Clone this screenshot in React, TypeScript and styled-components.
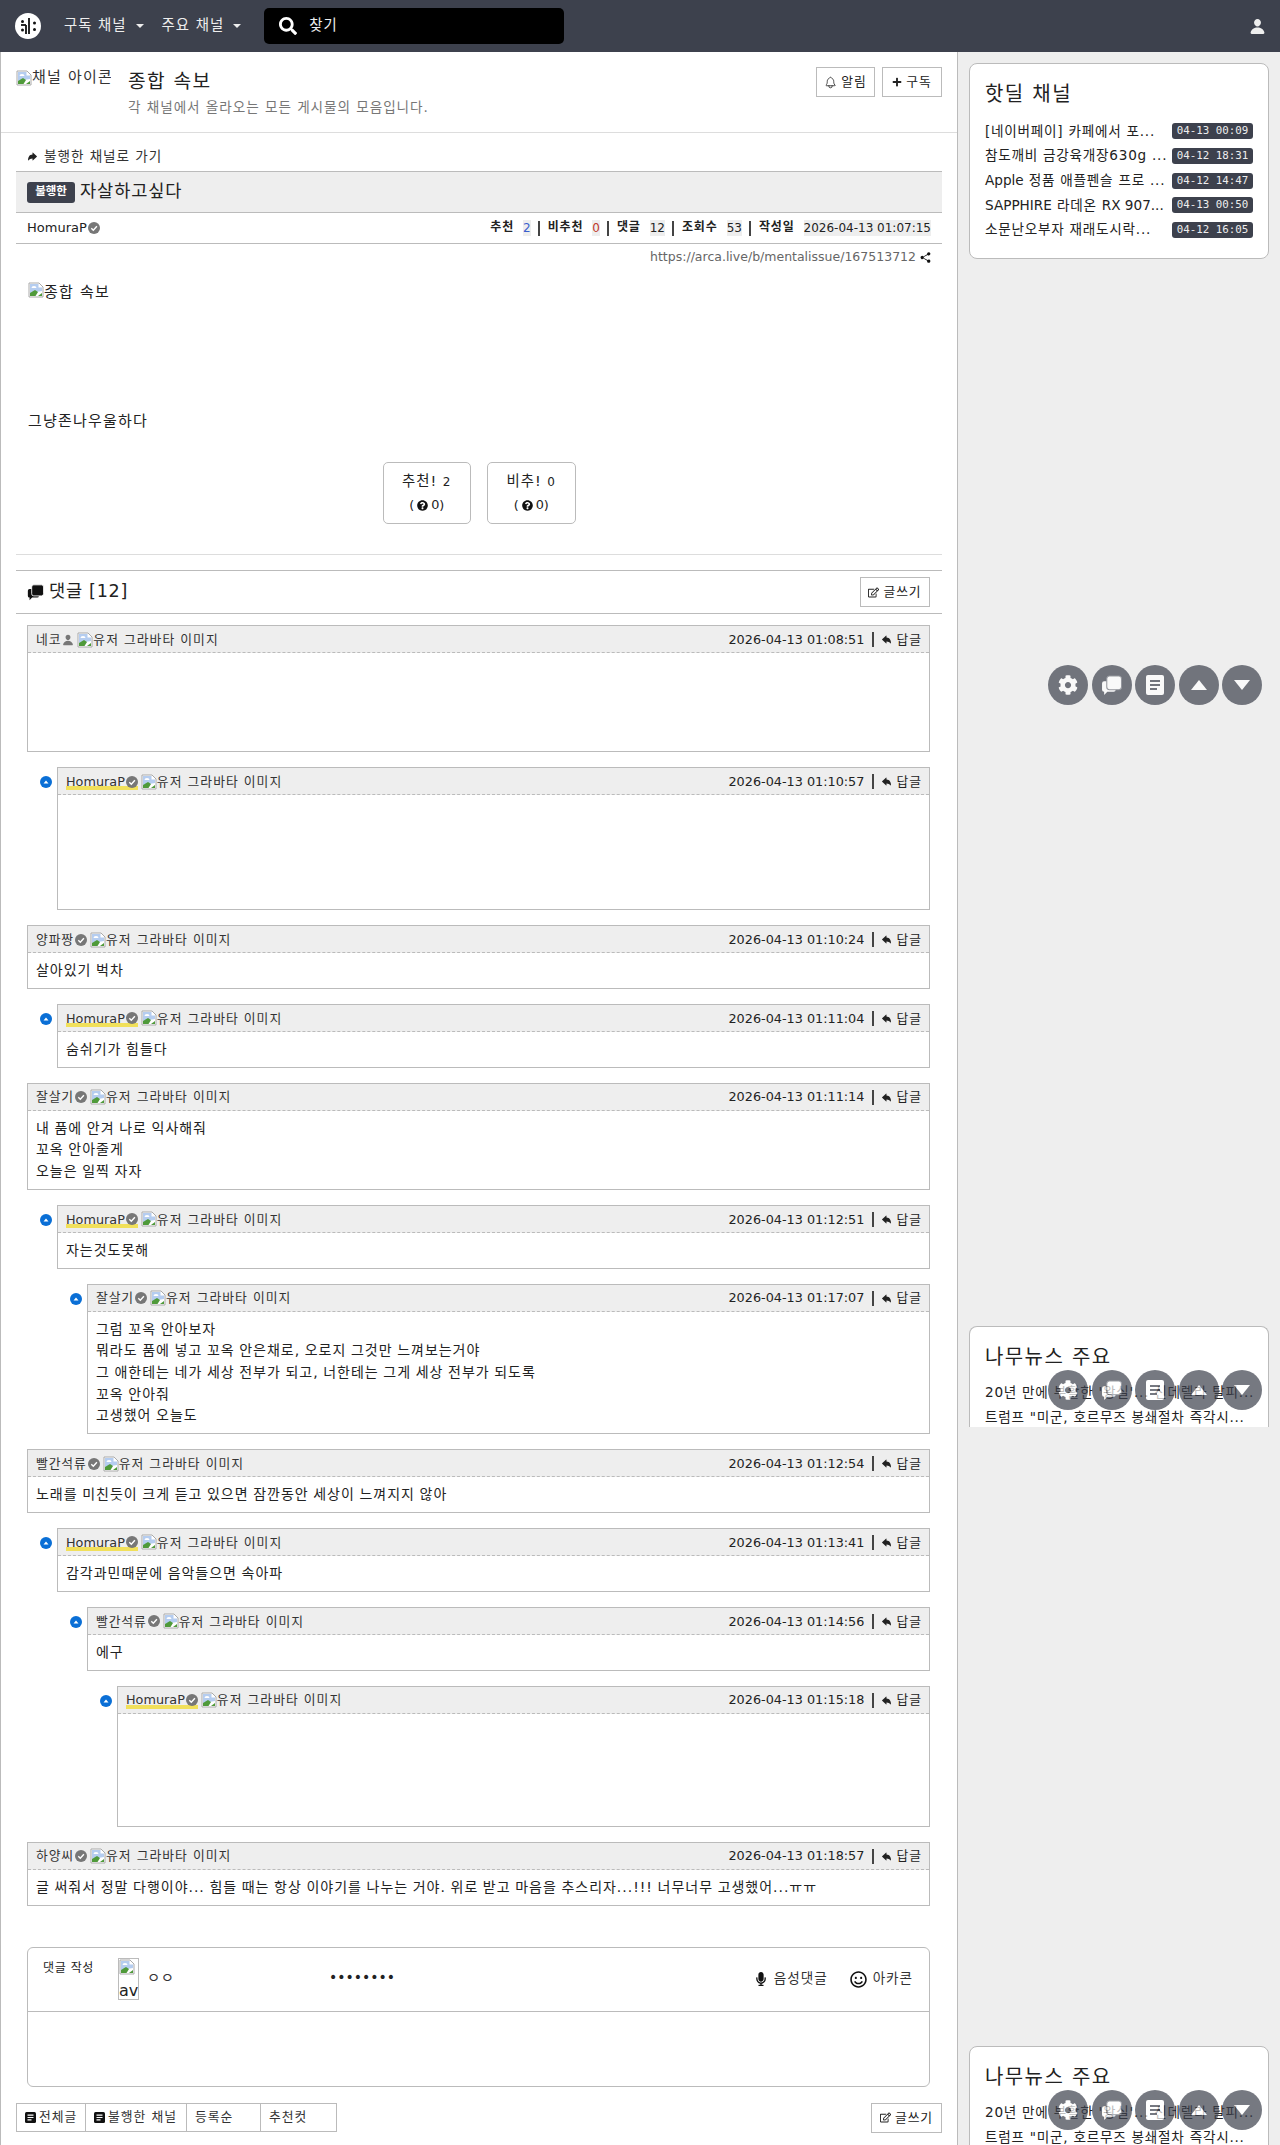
import type { ReactNode } from "react";
import styled, { createGlobalStyle } from "styled-components";
import {
  FaSearch,
  FaPlus,
  FaRegEdit,
  FaMicrophone,
  FaRegSmile,
  FaQuestionCircle,
  FaCog,
} from "react-icons/fa";
import {
  IoPerson,
  IoNotificationsOutline,
  IoShareSocial,
  IoArrowUndo,
  IoArrowRedo,
} from "react-icons/io5";

const GlobalStyle = createGlobalStyle`
  html, body {
    margin: 0;
    padding: 0;
  }
  body {
    font-family: "DejaVu Sans", "Noto Sans CJK KR", sans-serif;
    font-size: 14.4px;
    line-height: 21.6px;
    color: #222;
    background: #eee;
  }
  * {
    box-sizing: border-box;
  }
`;

const Page = styled.div`
  position: relative;
  width: 1280px;
  height: 2145px;
  overflow: hidden;
`;

const TopBar = styled.header`
  height: 52px;
  background: #3d414d;
  display: flex;
  align-items: center;
  padding: 0 14px 0 15px;
  color: #eee;
`;

const NavItem = styled.div`
  display: flex;
  align-items: center;
  font-size: 14.4px;
  letter-spacing: 0.07em;
  margin-right: 18px;

  &::after {
    content: "";
    margin-left: 9px;
    border-top: 4.5px solid #eee;
    border-left: 4.5px solid transparent;
    border-right: 4.5px solid transparent;
  }
`;

const Logo = styled.svg`
  width: 26px;
  height: 26px;
  margin-right: 23px;
`;

const SearchBox = styled.div`
  width: 300px;
  height: 36px;
  margin-left: 5px;
  background: #000;
  border-radius: 5px;
  display: flex;
  align-items: center;
  padding-left: 15px;
  gap: 12px;
  color: #eee;
  font-size: 14.4px;
  letter-spacing: 0.07em;
`;

const UserButton = styled.div`
  margin-left: auto;
  display: flex;
  color: #eee;
  font-size: 17px;
`;

const Body = styled.div`
  display: flex;
  align-items: flex-start;
`;

const Main = styled.main`
  width: 958px;
  height: 2093px;
  background: #fff;
  border-left: 1px solid #bbb;
  border-right: 1px solid #bbb;
`;

const ChannelHead = styled.section`
  height: 81px;
  border-bottom: 1px solid #ddd;
  display: flex;
  padding: 15px 15px 0;
`;

const ChannelIcon = styled.div`
  width: 95px;
  height: 20px;
  margin: 1px 17px 0 0;
  overflow: hidden;
  white-space: nowrap;
  font-size: 15px;
  letter-spacing: 0.08em;
  color: #333;
  display: flex;
  align-items: center;
`;

const ChannelText = styled.div`
  flex: 1;
`;

const ChannelTitle = styled.h1`
  margin: 0;
  font-weight: 400;
  font-size: 19.2px;
  letter-spacing: 0.07em;
  line-height: 30px;
  color: #222;
`;

const ChannelDesc = styled.p`
  margin: 0;
  font-size: 13.6px;
  letter-spacing: 0.07em;
  line-height: 20px;
  color: #777;
`;

const OutlineButton = styled.div<{ $w: number }>`
  width: ${(p) => p.$w}px;
  height: 30px;
  display: inline-flex;
  align-items: center;
  justify-content: center;
  gap: 4px;
  border: 1px solid #bbb;
  background: #fff;
  font-size: 12.8px;
  letter-spacing: 0.07em;
  color: #222;
  white-space: nowrap;
`;

const ChannelActions = styled.div`
  display: flex;
  gap: 7px;
`;

const Article = styled.article`
  padding: 0 15px;
`;

const BackLink = styled.div`
  height: 38px;
  display: flex;
  align-items: center;
  gap: 6px;
  padding: 9px 0 0 11px;
  font-size: 13.6px;
  letter-spacing: 0.07em;
  color: #333;
`;

const TitleBar = styled.div`
  height: 42px;
  display: flex;
  align-items: center;
  padding-left: 11px;
  gap: 5px;
  background: #eee;
  border-top: 1px solid #bbb;
  border-bottom: 1px solid #bbb;
  font-size: 17.6px;
  letter-spacing: 0.05em;
  color: #222;
`;

const CategoryBadge = styled.span`
  height: 21px;
  width: 48px;
  display: inline-flex;
  align-items: center;
  justify-content: center;
  border-radius: 3px;
  background: #3d414d;
  color: #fff;
  font-size: 11.5px;
  font-weight: 700;
  letter-spacing: 0;
`;

const InfoRow = styled.div`
  height: 31px;
  display: flex;
  align-items: center;
  justify-content: space-between;
  padding: 0 11px;
  border-bottom: 1px solid #bbb;
  font-size: 13px;
`;

const Author = styled.span`
  display: inline-flex;
  align-items: center;
  gap: 1px;
`;

const Stats = styled.div`
  display: flex;
  align-items: center;
  font-size: 12px;
`;

const StatLabel = styled.b`
  margin-right: 9px;
  letter-spacing: 0.07em;
`;

const StatValue = styled.span<{ $color?: string }>`
  background: #eee;
  line-height: 16px;
  color: ${(p) => p.$color ?? "#222"};
`;

const StatSep = styled.i`
  width: 2px;
  height: 15px;
  margin: 0 7.5px;
  background: #444;
`;

const UrlRow = styled.div`
  height: 26px;
  display: flex;
  align-items: center;
  justify-content: flex-end;
  gap: 3px;
  padding-right: 10px;
  font-size: 12.5px;
  color: #666;
`;

const ArticleBody = styled.div`
  height: 192px;
  padding: 12px 12px 0;
  font-size: 15px;
  letter-spacing: 0.08em;
`;

const ArticleImage = styled.div`
  display: flex;
  height: 129px;
  align-items: flex-start;
`;

const VoteRow = styled.div`
  display: flex;
  justify-content: center;
  gap: 16px;
  border-bottom: 1px solid #ddd;
  height: 93px;
`;

const VoteButton = styled.div`
  width: 88.5px;
  height: 62px;
  border: 1px solid #bbb;
  border-radius: 5px;
  text-align: center;
  padding-top: 6px;
  font-size: 14.4px;
  letter-spacing: 0.07em;
  line-height: 24px;
`;

const VoteCount = styled.small`
  font-size: 12px;
`;

const VoteSub = styled.div`
  font-size: 12.8px;
  letter-spacing: 0;
  line-height: 22px;
  display: flex;
  align-items: center;
  justify-content: center;
  gap: 3px;
`;

const CommentHead = styled.div`
  margin-top: 15px;
  height: 44px;
  display: flex;
  align-items: center;
  justify-content: space-between;
  border-top: 1px solid #bbb;
  border-bottom: 1px solid #bbb;
  padding: 0 12px 0 11px;
`;

const CommentTitle = styled.h2`
  margin: 0;
  display: flex;
  align-items: center;
  gap: 5px;
  font-size: 17.6px;
  letter-spacing: 0.04em;
  font-weight: 400;
  color: #222;
`;

const CommentList = styled.div`
  display: flex;
  flex-direction: column;
  gap: 15px;
  padding: 11px 12px 0 11px;
`;

const CommentBox = styled.div<{ $depth: number }>`
  position: relative;
  margin-left: ${(p) => p.$depth * 30}px;
  border: 1px solid #bbb;
`;

const CollapseMark = styled.svg`
  position: absolute;
  left: -18px;
  top: 8px;
  width: 12px;
  height: 12px;
`;

const CommentInfo = styled.div`
  height: 27px;
  background: #eee;
  border-bottom: 1px dashed #bbb;
  display: flex;
  align-items: center;
  justify-content: space-between;
  padding: 1px 8px 0;
  font-size: 12.8px;
  color: #333;
`;

const CommentUser = styled.div`
  display: flex;
  align-items: center;
  gap: 3px;
`;

const UserName = styled.span<{ $mine?: boolean }>`
  display: inline-flex;
  align-items: center;
  gap: 1px;
  letter-spacing: ${(p) => (p.$mine ? 0 : "0.07em")};
  background: ${(p) =>
    p.$mine
      ? "linear-gradient(to bottom, transparent 72%, #f1e05a 72%, #f1e05a 92%, transparent 92%)"
      : "none"};
`;

const AltImage = styled.span`
  display: inline-flex;
  align-items: center;
  letter-spacing: 0.08em;
`;

const CommentMeta = styled.div`
  display: flex;
  align-items: center;
  gap: 4px;
  color: #222;
`;

const MetaSep = styled.i`
  width: 2px;
  height: 15px;
  margin: 0 3px 0 4px;
  background: #444;
`;

const ReplyLabel = styled.span`
  letter-spacing: 0.08em;
  margin-right: -1px;
`;

const CommentText = styled.div<{ $blank?: number }>`
  min-height: ${(p) => p.$blank ?? 0}px;
  padding: 7px 8px 6.3px;
  font-size: 14px;
  letter-spacing: 0.07em;
  word-spacing: -0.8px;
  line-height: 21.6px;
  color: #222;
  white-space: pre-line;
`;

const WriteBox = styled.div`
  margin: 41px 12px 0 11px;
  height: 140px;
  border: 1px solid #bbb;
  border-radius: 6px;
`;

const WriteTop = styled.div`
  height: 64px;
  border-bottom: 1px solid #bbb;
  position: relative;
  display: flex;
  align-items: center;
  padding: 0 16px 0 15px;
  font-size: 14.4px;
`;

const WriteLabel = styled.span`
  align-self: flex-start;
  margin-top: 10px;
  width: 75px;
  font-size: 12px;
  letter-spacing: 0.05em;
`;

const AvatarBox = styled.div`
  width: 21px;
  height: 42px;
  border: 1px solid #bbb;
  overflow: hidden;
  font-size: 16px;
  line-height: 21px;
  margin-right: 8px;
`;

const WriterName = styled.span`
  width: 182px;
  font-size: 14.4px;
  letter-spacing: 0.5px;
  color: #333;
`;

const PasswordDots = styled.span`
  font-size: 14px;
  letter-spacing: 0;
  margin-top: -2px;
`;

const WriteTools = styled.div`
  margin-left: auto;
  display: flex;
  align-items: center;
  font-size: 13.6px;
  letter-spacing: 0.07em;
  color: #333;
`;

const WriteTool = styled.span`
  display: inline-flex;
  align-items: center;
  gap: 6px;
  margin-left: 22px;
`;

const BottomBar = styled.div`
  margin-top: 16px;
  display: flex;
  justify-content: space-between;
`;

const Tabs = styled.div`
  display: flex;
`;

const Tab = styled.div<{ $w: number }>`
  width: ${(p) => p.$w}px;
  height: 29px;
  border: 1px solid #bbb;
  margin-left: -1px;
  display: flex;
  align-items: center;
  gap: 3px;
  padding-left: 8px;
  font-size: 12.8px;
  letter-spacing: 0.08em;
  color: #333;

  &:first-child {
    margin-left: 0;
  }
`;

const Sidebar = styled.aside`
  width: 322px;
  padding: 0 11px;
`;

const Card = styled.section<{ $top: number; $clip?: number }>`
  margin-top: ${(p) => p.$top}px;
  height: ${(p) => (p.$clip ? `${p.$clip}px` : "auto")};
  overflow: hidden;
  background: #fff;
  border: 1px solid #bbb;
  border-bottom: ${(p) => (p.$clip ? "none" : "1px solid #bbb")};
  border-radius: 8px 8px ${(p) => (p.$clip ? "0 0" : "8px 8px")};
  padding: 15px 15px 16px;
`;

const CardTitle = styled.h3<{ $gap: number }>`
  margin: 0 0 ${(p) => p.$gap}px;
  font-size: 20px;
  letter-spacing: 0.07em;
  font-weight: 400;
  line-height: 30px;
  color: #222;
`;

const CardRow = styled.div`
  height: 24.7px;
  display: flex;
  align-items: center;
  justify-content: space-between;
  font-size: 13.6px;
  letter-spacing: 0.055em;
  color: #222;
  white-space: nowrap;
`;

const Latin = styled.span`
  letter-spacing: 0;
`;

const DateBadge = styled.span`
  flex: none;
  width: 81px;
  height: 16px;
  text-align: center;
  background: #3d414d;
  color: #eee;
  border-radius: 3px;
  font-family: "DejaVu Sans Mono", monospace;
  font-size: 10.8px;
  letter-spacing: 0;
  line-height: 16px;
`;

const FloatGroup = styled.div<{ $top: number }>`
  position: absolute;
  top: ${(p) => p.$top}px;
  left: 1048px;
  display: flex;
  gap: 3.5px;
`;

const FloatButton = styled.div`
  width: 40px;
  height: 40px;
  border-radius: 50%;
  background: #3d414d;
  opacity: 0.7;
  color: #fff;
  display: flex;
  align-items: center;
  justify-content: center;
  font-size: 20px;
`;

function BrokenImage() {
  return (
    <svg width="16" height="16" viewBox="0 0 16 16" style={{ flex: "none" }}>
      <path d="M1 1h10l4 4v10H1z" fill="#fff" stroke="#aaa" />
      <path d="M2 2h8.500v3.500H14V9L2 11z" fill="#b5cdf0" />
      <path d="M3.500 6a2.500 2 0 0 1 5 0z" fill="#fff" />
      <path d="M2 14v-3l5-3 3 2-2.500 4z" fill="#4f9a3a" />
      <path d="M10 14l4-3v3z" fill="#4f9a3a" />
    </svg>
  );
}

function Verified() {
  return (
    <svg width="12" height="12" viewBox="0 0 12 12" style={{ flex: "none" }}>
      <circle cx="6" cy="6" r="6" fill="#777" />
      <path d="M3.300 6.200l2 2 3.600-4" fill="none" stroke="#fff" strokeWidth="1.400" />
    </svg>
  );
}

function ListIcon() {
  return (
    <svg width="11" height="11" viewBox="0 0 11 11" style={{ flex: "none" }}>
      <rect width="11" height="11" rx="1.500" fill="#111" />
      <path d="M2.500 3.200h6M2.500 5.500h6M2.500 7.800h4" stroke="#fff" strokeWidth="1.200" />
    </svg>
  );
}

function DocIcon() {
  return (
    <svg width="18" height="20" viewBox="0 0 18 20">
      <rect width="18" height="20" rx="2" fill="#fff" />
      <path d="M4 6h10M4 10h10M4 14h7" stroke="#3d414d" strokeWidth="2" />
    </svg>
  );
}

function BubblesIcon({ size, color, gap }: { size: number; color: string; gap: string }) {
  return (
    <svg width={size} height={size} viewBox="0 0 20 20">
      <path
        d="M3 6h9a2 2 0 0 1 2 2v6a2 2 0 0 1-2 2H6l-3 3v-3a2 2 0 0 1-2-2V8a2 2 0 0 1 2-2z"
        fill={color}
      />
      <path
        d="M8 1h9a2.500 2.500 0 0 1 2.500 2.500v8A2.500 2.500 0 0 1 17 14H8a2.500 2.500 0 0 1-2.500-2.500v-8A2.500 2.500 0 0 1 8 1z"
        fill={color}
        stroke={gap}
      />
    </svg>
  );
}

function Triangle({ down }: { down?: boolean }) {
  return (
    <svg width="16" height="12" viewBox="0 0 16 12">
      <path d={down ? "M0 1h16L8 11z" : "M0 11h16L8 1z"} fill="#fff" />
    </svg>
  );
}

function FloatButtons({ top }: { top: number }) {
  return (
    <FloatGroup $top={top}>
      <FloatButton>
        <FaCog />
      </FloatButton>
      <FloatButton>
        <BubblesIcon size={21} color="#fff" gap="#6f727b" />
      </FloatButton>
      <FloatButton>
        <DocIcon />
      </FloatButton>
      <FloatButton>
        <Triangle />
      </FloatButton>
      <FloatButton>
        <Triangle down />
      </FloatButton>
    </FloatGroup>
  );
}

type Comment = {
  name: string;
  date: string;
  depth: number;
  text?: string;
  blank?: number;
  guest?: boolean;
};

const comments: Comment[] = [
  { name: "네코", date: "2026-04-13 01:08:51", depth: 0, blank: 98, guest: true },
  { name: "HomuraP", date: "2026-04-13 01:10:57", depth: 1, blank: 114 },
  { name: "양파짱", date: "2026-04-13 01:10:24", depth: 0, text: "살아있기 벅차" },
  { name: "HomuraP", date: "2026-04-13 01:11:04", depth: 1, text: "숨쉬기가 힘들다" },
  {
    name: "잘살기",
    date: "2026-04-13 01:11:14",
    depth: 0,
    text: "내 품에 안겨 나로 익사해줘\n꼬옥 안아줄게\n오늘은 일찍 자자",
  },
  { name: "HomuraP", date: "2026-04-13 01:12:51", depth: 1, text: "자는것도못해" },
  {
    name: "잘살기",
    date: "2026-04-13 01:17:07",
    depth: 2,
    text: "그럼 꼬옥 안아보자\n뭐라도 품에 넣고 꼬옥 안은채로, 오로지 그것만 느껴보는거야\n그 애한테는 네가 세상 전부가 되고, 너한테는 그게 세상 전부가 되도록\n꼬옥 안아줘\n고생했어 오늘도",
  },
  {
    name: "빨간석류",
    date: "2026-04-13 01:12:54",
    depth: 0,
    text: "노래를 미친듯이 크게 듣고 있으면 잠깐동안 세상이 느껴지지 않아",
  },
  {
    name: "HomuraP",
    date: "2026-04-13 01:13:41",
    depth: 1,
    text: "감각과민때문에 음악들으면 속아파",
  },
  { name: "빨간석류", date: "2026-04-13 01:14:56", depth: 2, text: "에구" },
  { name: "HomuraP", date: "2026-04-13 01:15:18", depth: 3, blank: 112 },
  {
    name: "하양씨",
    date: "2026-04-13 01:18:57",
    depth: 0,
    text: "글 써줘서 정말 다행이야... 힘들 때는 항상 이야기를 나누는 거야. 위로 받고 마음을 추스리자...!!! 너무너무 고생했어...ㅠㅠ",
  },
];

const hotDeals: { title: ReactNode; date: string }[] = [
  { title: "[네이버페이] 카페에서 포...", date: "04-13 00:09" },
  { title: "참도깨비 금강육개장630g ...", date: "04-12 18:31" },
  { title: <><Latin>Apple</Latin> 정품 애플펜슬 프로 ...</>, date: "04-12 14:47" },
  { title: <><Latin>SAPPHIRE</Latin> 라데온 <Latin>RX 907...</Latin></>, date: "04-13 00:50" },
  { title: "소문난오부자 재래도시락...", date: "04-12 16:05" },
];

function NewsCard({ top, clip }: { top: number; clip?: number }) {
  return (
    <Card $top={top} $clip={clip}>
      <CardTitle $gap={8}>나무뉴스 주요</CardTitle>
      <CardRow>20년 만에 부활한 '왕실'... 신데렐라 탈피...</CardRow>
      <CardRow>트럼프 "미군, 호르무즈 봉쇄절차 즉각시...</CardRow>
    </Card>
  );
}

export default function App() {
  return (
    <Page>
      <GlobalStyle />
      <TopBar>
        <Logo viewBox="0 0 26 26">
          <circle cx="13" cy="13" r="13" fill="#fff" />
          <path d="M14 5v16M11 12v9" stroke="#111" strokeWidth="1.800" />
          <path d="M6 12h5" stroke="#111" strokeWidth="1.800" />
          <circle cx="7.500" cy="8.500" r="1.500" fill="#111" />
          <circle cx="7.500" cy="17" r="1.500" fill="#111" />
          <circle cx="19.500" cy="10" r="1.500" fill="#111" />
          <circle cx="19.500" cy="16.500" r="1.500" fill="#111" />
        </Logo>
        <NavItem>구독 채널</NavItem>
        <NavItem>주요 채널</NavItem>
        <SearchBox>
          <FaSearch size={18} color="#fff" />
          찾기
        </SearchBox>
        <UserButton>
          <IoPerson />
        </UserButton>
      </TopBar>
      <Body>
        <Main>
          <ChannelHead>
            <ChannelIcon>
              <BrokenImage />
              채널 아이콘
            </ChannelIcon>
            <ChannelText>
              <ChannelTitle>종합 속보</ChannelTitle>
              <ChannelDesc>각 채널에서 올라오는 모든 게시물의 모음입니다.</ChannelDesc>
            </ChannelText>
            <ChannelActions>
              <OutlineButton $w={59}>
                <IoNotificationsOutline size={13} />
                알림
              </OutlineButton>
              <OutlineButton $w={60}>
                <FaPlus size={10} />
                구독
              </OutlineButton>
            </ChannelActions>
          </ChannelHead>
          <Article>
            <BackLink>
              <IoArrowRedo size={11} color="#222" />
              불행한 채널로 가기
            </BackLink>
            <TitleBar>
              <CategoryBadge>불행한</CategoryBadge>
              자살하고싶다
            </TitleBar>
            <InfoRow>
              <Author>
                HomuraP
                <Verified />
              </Author>
              <Stats>
                <StatLabel>추천</StatLabel>
                <StatValue $color="#3a5fcd">2</StatValue>
                <StatSep />
                <StatLabel>비추천</StatLabel>
                <StatValue $color="#c0392b">0</StatValue>
                <StatSep />
                <StatLabel>댓글</StatLabel>
                <StatValue>12</StatValue>
                <StatSep />
                <StatLabel>조회수</StatLabel>
                <StatValue>53</StatValue>
                <StatSep />
                <StatLabel>작성일</StatLabel>
                <StatValue>2026-04-13 01:07:15</StatValue>
              </Stats>
            </InfoRow>
            <UrlRow>
              https://arca.live/b/mentalissue/167513712
              <IoShareSocial size={13} color="#111" />
            </UrlRow>
            <ArticleBody>
              <ArticleImage>
                <BrokenImage />
                종합 속보
              </ArticleImage>
              그냥존나우울하다
            </ArticleBody>
            <VoteRow>
              <VoteButton>
                추천! <VoteCount>2</VoteCount>
                <VoteSub>
                  (<FaQuestionCircle size={11} color="#111" /> 0)
                </VoteSub>
              </VoteButton>
              <VoteButton>
                비추! <VoteCount>0</VoteCount>
                <VoteSub>
                  (<FaQuestionCircle size={11} color="#111" /> 0)
                </VoteSub>
              </VoteButton>
            </VoteRow>
            <CommentHead>
              <CommentTitle>
                <BubblesIcon size={17} color="#111" gap="#fff" />
                댓글 [12]
              </CommentTitle>
              <OutlineButton $w={70}>
                <FaRegEdit size={11} />
                글쓰기
              </OutlineButton>
            </CommentHead>
            <CommentList>
              {comments.map((c) => (
                <CommentBox key={c.date} $depth={c.depth}>
                  {c.depth > 0 && (
                    <CollapseMark viewBox="0 0 12 12">
                      <circle cx="6" cy="6" r="6" fill="#0a6fd6" />
                      <path d="M3.500 7.500h5L6 4.500z" fill="#fff" />
                    </CollapseMark>
                  )}
                  <CommentInfo>
                    <CommentUser>
                      <UserName $mine={c.name === "HomuraP"}>
                        {c.name}
                        {c.guest ? <IoPerson size={12} color="#777" /> : <Verified />}
                      </UserName>
                      <AltImage>
                        <BrokenImage />
                        유저 그라바타 이미지
                      </AltImage>
                    </CommentUser>
                    <CommentMeta>
                      {c.date}
                      <MetaSep />
                      <IoArrowUndo size={11} color="#222" />
                      <ReplyLabel>답글</ReplyLabel>
                    </CommentMeta>
                  </CommentInfo>
                  <CommentText $blank={c.blank}>{c.text}</CommentText>
                </CommentBox>
              ))}
            </CommentList>
            <WriteBox>
              <WriteTop>
                <WriteLabel>댓글 작성</WriteLabel>
                <AvatarBox>
                  <BrokenImage />
                  av
                </AvatarBox>
                <WriterName>ㅇㅇ</WriterName>
                <PasswordDots>••••••••</PasswordDots>
                <WriteTools>
                  <WriteTool>
                    <FaMicrophone size={14} color="#111" />
                    음성댓글
                  </WriteTool>
                  <WriteTool>
                    <FaRegSmile size={17} color="#111" />
                    아카콘
                  </WriteTool>
                </WriteTools>
              </WriteTop>
            </WriteBox>
            <BottomBar>
              <Tabs>
                <Tab $w={70}>
                  <ListIcon />
                  전체글
                </Tab>
                <Tab $w={102}>
                  <ListIcon />
                  불행한 채널
                </Tab>
                <Tab $w={75}>등록순</Tab>
                <Tab $w={77}>추천컷</Tab>
              </Tabs>
              <OutlineButton $w={71}>
                <FaRegEdit size={11} />
                글쓰기
              </OutlineButton>
            </BottomBar>
          </Article>
        </Main>
        <Sidebar>
          <Card $top={11}>
            <CardTitle $gap={10}>핫딜 채널</CardTitle>
            {hotDeals.map(({ title, date }) => (
              <CardRow key={date}>
                <span>{title}</span>
                <DateBadge>{date}</DateBadge>
              </CardRow>
            ))}
          </Card>
          <NewsCard top={1067} clip={101} />
          <NewsCard top={619} />
        </Sidebar>
      </Body>
      <FloatButtons top={665} />
      <FloatButtons top={1370} />
      <FloatButtons top={2090} />
    </Page>
  );
}
